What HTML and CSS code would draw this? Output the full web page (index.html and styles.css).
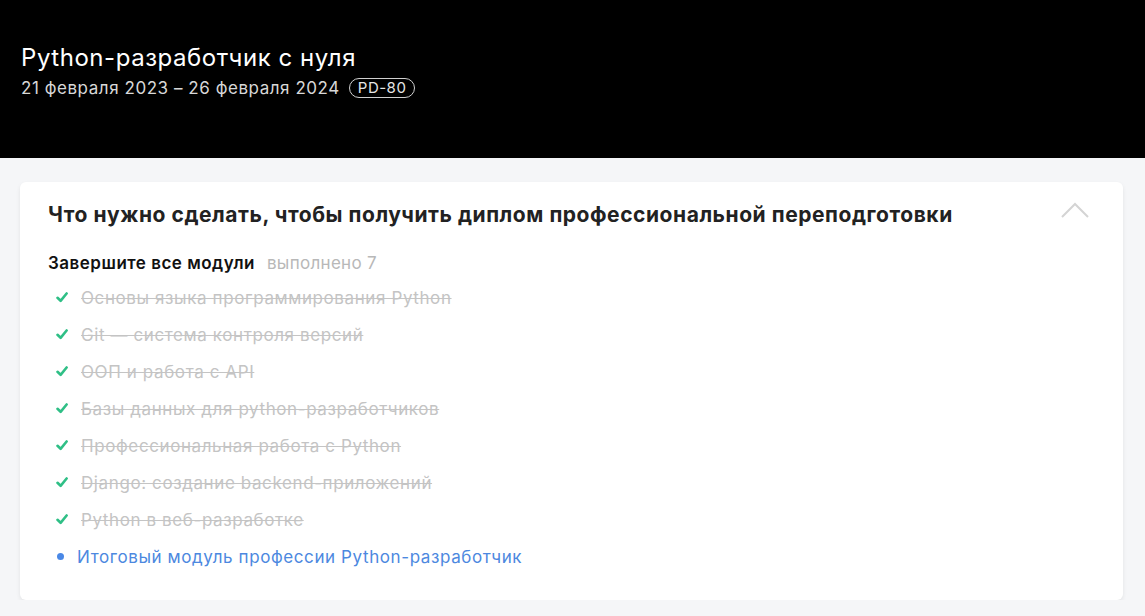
FILE: index.html
```html
<!DOCTYPE html>
<html lang="ru">
<head>
<meta charset="utf-8">
<link rel="stylesheet" href="styles.css">
</head>
<body>
<header class="hero">
  <h1 class="hero-title">Python-разработчик с нуля</h1>
  <div class="hero-meta">
    <span class="hero-dates">21 февраля 2023 – 26 февраля 2024</span>
    <span class="hero-badge">PD-80</span>
  </div>
</header>
<main class="content">
  <section class="card">
    <div class="card-head">
      <h2 class="card-title">Что нужно сделать, чтобы получить диплом профессиональной переподготовки</h2>
      <svg class="chevron" width="28" height="16" viewBox="0 0 28 16"><path d="M1 15 L14 2 L27 15" fill="none" stroke="#d4d4d4" stroke-width="2"/></svg>
    </div>
    <div class="task">
      <span class="task-name">Завершите все модули</span>
      <span class="task-count">выполнено 7</span>
    </div>
    <ul class="modules">
      <li class="module done"><svg class="check" width="12" height="11" viewBox="0 0 12 11"><path d="M1.5 5.8 L4.6 8.8 L10.6 1.5" fill="none" stroke="#2fbf86" stroke-width="2.6" stroke-linecap="round" stroke-linejoin="round"/></svg><span>Основы языка программирования Python</span></li>
      <li class="module done"><svg class="check" width="12" height="11" viewBox="0 0 12 11"><path d="M1.5 5.8 L4.6 8.8 L10.6 1.5" fill="none" stroke="#2fbf86" stroke-width="2.6" stroke-linecap="round" stroke-linejoin="round"/></svg><span>Git — система контроля версий</span></li>
      <li class="module done"><svg class="check" width="12" height="11" viewBox="0 0 12 11"><path d="M1.5 5.8 L4.6 8.8 L10.6 1.5" fill="none" stroke="#2fbf86" stroke-width="2.6" stroke-linecap="round" stroke-linejoin="round"/></svg><span>ООП и работа с API</span></li>
      <li class="module done"><svg class="check" width="12" height="11" viewBox="0 0 12 11"><path d="M1.5 5.8 L4.6 8.8 L10.6 1.5" fill="none" stroke="#2fbf86" stroke-width="2.6" stroke-linecap="round" stroke-linejoin="round"/></svg><span>Базы данных для python-разработчиков</span></li>
      <li class="module done"><svg class="check" width="12" height="11" viewBox="0 0 12 11"><path d="M1.5 5.8 L4.6 8.8 L10.6 1.5" fill="none" stroke="#2fbf86" stroke-width="2.6" stroke-linecap="round" stroke-linejoin="round"/></svg><span>Профессиональная работа с Python</span></li>
      <li class="module done"><svg class="check" width="12" height="11" viewBox="0 0 12 11"><path d="M1.5 5.8 L4.6 8.8 L10.6 1.5" fill="none" stroke="#2fbf86" stroke-width="2.6" stroke-linecap="round" stroke-linejoin="round"/></svg><span>Django: создание backend-приложений</span></li>
      <li class="module done"><svg class="check" width="12" height="11" viewBox="0 0 12 11"><path d="M1.5 5.8 L4.6 8.8 L10.6 1.5" fill="none" stroke="#2fbf86" stroke-width="2.6" stroke-linecap="round" stroke-linejoin="round"/></svg><span>Python в веб-разработке</span></li>
      <li class="module current"><span class="dot"></span><span>Итоговый модуль профессии Python-разработчик</span></li>
    </ul>
  </section>
</main>
</body>
</html>
```
FILE: styles.css
```css
* { box-sizing: border-box; }
html, body { margin: 0; padding: 0; }
body {
  background: #f5f6f8;
  font-family: Inter, "Noto Sans", sans-serif;
  color: #000;
}
.hero {
  background: #000;
  height: 158px;
  padding: 43px 21px 0;
  color: #fff;
}
.hero-title {
  margin: 0;
  font-size: 24px;
  font-weight: 400;
  line-height: 30px;
  letter-spacing: 0.55px;
}
.hero-meta {
  display: flex;
  align-items: center;
  gap: 9px;
  margin-top: 3px;
  height: 24px;
}
.hero-dates {
  font-size: 17px;
  color: #d8d8d8;
  letter-spacing: 0.55px;
}
.hero-badge {
  font-size: 15px;
  color: #e6e6e6;
  border: 1px solid #d0d0d0;
  border-radius: 10px;
  padding: 0 8px;
  height: 20px;
  line-height: 18px;
  letter-spacing: 0.5px;
}
.content {
  padding: 24px 22px 0 20px;
}
.card {
  background: #fff;
  border-radius: 6px;
  box-shadow: 0 2px 4px rgba(0,0,0,0.08);
  padding: 20px 28px 30px 28px;
  height: 418px;
}
.card-head {
  display: flex;
  justify-content: space-between;
  align-items: flex-start;
}
.card-title {
  margin: 0;
  font-size: 21px;
  font-weight: 700;
  line-height: 26px;
  letter-spacing: 0.55px;
  color: #222;
}
.chevron { margin-top: 0; margin-right: 6px; }
.task {
  margin-top: 24px;
  display: flex;
  gap: 12px;
  font-size: 17px;
  line-height: 22px;
  letter-spacing: 0.5px;
}
.task-name { font-weight: 600; color: #111; }
.task-count { color: #b8b8b8; letter-spacing: 0.3px; }
.modules {
  list-style: none;
  margin: 5px 0 0;
  padding: 0;
}
.module {
  display: flex;
  align-items: center;
  height: 37px;
  font-size: 17px;
  letter-spacing: 0.6px;
}
.module.done { color: #c4c4c4; }
.module.done span { text-decoration: line-through; }
.check { margin-left: 8px; margin-right: 13px; flex: none; }
.module.current { color: #4c88e0; }
.dot {
  width: 7px; height: 7px;
  border-radius: 50%;
  background: #4a88e6;
  margin-left: 9px;
  margin-right: 13px;
  flex: none;
}
```
